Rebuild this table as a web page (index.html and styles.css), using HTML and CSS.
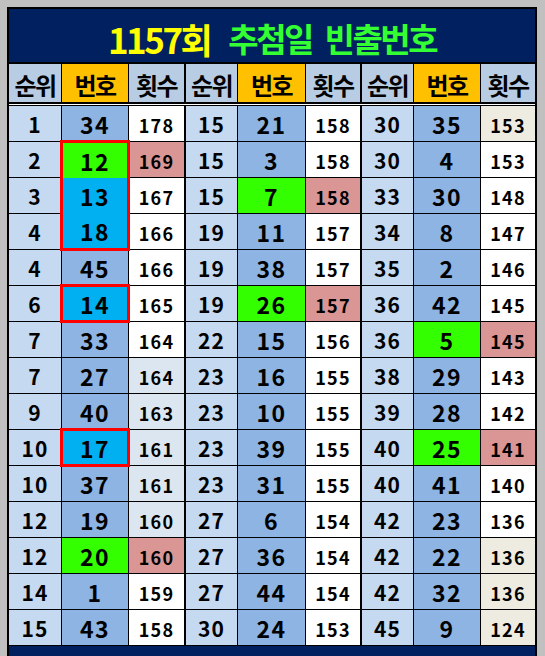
FILE: index.html
```html
<!DOCTYPE html>
<html lang="ko">
<head>
<meta charset="utf-8">
<link rel="stylesheet" href="styles.css">
</head>
<body>
<div class="sheet">
  <div class="title"><span class="t-yel">1157회</span><span class="t-grn">추첨일 빈출번호</span></div>
  <div class="head">
    <div class="h">순위</div><div class="h o">번호</div><div class="h sep">횟수</div>
    <div class="h">순위</div><div class="h o">번호</div><div class="h sep">횟수</div>
    <div class="h">순위</div><div class="h o">번호</div><div class="h">횟수</div>
  </div>
  <div class="dbl"></div>
  <div class="grid">
    <!-- row 1 -->
    <div class="c rk">1</div><div class="c nm">34</div><div class="c ct sep">178</div>
    <div class="c rk">15</div><div class="c nm">21</div><div class="c ct sep">158</div>
    <div class="c rk">30</div><div class="c nm">35</div><div class="c ct bg">153</div>
    <!-- row 2 -->
    <div class="c rk">2</div>
    <div class="hl3"><div class="c nm g">12</div><div class="c nm cy">13</div><div class="c nm cy">18</div></div>
    <div class="c ct sep pk">169</div>
    <div class="c rk">15</div><div class="c nm">3</div><div class="c ct sep">158</div>
    <div class="c rk">30</div><div class="c nm">4</div><div class="c ct">153</div>
    <!-- row 3 -->
    <div class="c rk">3</div><div class="c ct sep">167</div>
    <div class="c rk">15</div><div class="c nm g">7</div><div class="c ct sep pk">158</div>
    <div class="c rk">33</div><div class="c nm">30</div><div class="c ct">148</div>
    <!-- row 4 -->
    <div class="c rk">4</div><div class="c ct sep">166</div>
    <div class="c rk">19</div><div class="c nm">11</div><div class="c ct sep">157</div>
    <div class="c rk">34</div><div class="c nm">8</div><div class="c ct">147</div>
    <!-- row 5 -->
    <div class="c rk">4</div><div class="c nm">45</div><div class="c ct sep">166</div>
    <div class="c rk">19</div><div class="c nm">38</div><div class="c ct sep">157</div>
    <div class="c rk">35</div><div class="c nm">2</div><div class="c ct">146</div>
    <!-- row 6 -->
    <div class="c rk">6</div><div class="hl"><div class="c nm cy">14</div></div><div class="c ct sep">165</div>
    <div class="c rk">19</div><div class="c nm g">26</div><div class="c ct sep pk">157</div>
    <div class="c rk">36</div><div class="c nm">42</div><div class="c ct">145</div>
    <!-- row 7 -->
    <div class="c rk">7</div><div class="c nm">33</div><div class="c ct sep">164</div>
    <div class="c rk">22</div><div class="c nm">15</div><div class="c ct sep">156</div>
    <div class="c rk">36</div><div class="c nm g">5</div><div class="c ct pk">145</div>
    <!-- row 8 -->
    <div class="c rk">7</div><div class="c nm">27</div><div class="c ct sep lt">164</div>
    <div class="c rk">23</div><div class="c nm">16</div><div class="c ct sep">155</div>
    <div class="c rk">38</div><div class="c nm">29</div><div class="c ct">143</div>
    <!-- row 9 -->
    <div class="c rk">9</div><div class="c nm">40</div><div class="c ct sep lt">163</div>
    <div class="c rk">23</div><div class="c nm">10</div><div class="c ct sep">155</div>
    <div class="c rk">39</div><div class="c nm">28</div><div class="c ct">142</div>
    <!-- row 10 -->
    <div class="c rk">10</div><div class="hl"><div class="c nm cy">17</div></div><div class="c ct sep lt">161</div>
    <div class="c rk">23</div><div class="c nm">39</div><div class="c ct sep">155</div>
    <div class="c rk">40</div><div class="c nm g">25</div><div class="c ct pk">141</div>
    <!-- row 11 -->
    <div class="c rk">10</div><div class="c nm">37</div><div class="c ct sep lt">161</div>
    <div class="c rk">23</div><div class="c nm">31</div><div class="c ct sep">155</div>
    <div class="c rk">40</div><div class="c nm">41</div><div class="c ct">140</div>
    <!-- row 12 -->
    <div class="c rk">12</div><div class="c nm">19</div><div class="c ct sep lt">160</div>
    <div class="c rk">27</div><div class="c nm">6</div><div class="c ct sep">154</div>
    <div class="c rk">42</div><div class="c nm">23</div><div class="c ct">136</div>
    <!-- row 13 -->
    <div class="c rk">12</div><div class="c nm g">20</div><div class="c ct sep pk">160</div>
    <div class="c rk">27</div><div class="c nm">36</div><div class="c ct sep">154</div>
    <div class="c rk">42</div><div class="c nm">22</div><div class="c ct bg">136</div>
    <!-- row 14 -->
    <div class="c rk">14</div><div class="c nm">1</div><div class="c ct sep">159</div>
    <div class="c rk">27</div><div class="c nm">44</div><div class="c ct sep">154</div>
    <div class="c rk">42</div><div class="c nm">32</div><div class="c ct bg">136</div>
    <!-- row 15 -->
    <div class="c rk">15</div><div class="c nm">43</div><div class="c ct sep">158</div>
    <div class="c rk">30</div><div class="c nm">24</div><div class="c ct sep">153</div>
    <div class="c rk">45</div><div class="c nm">9</div><div class="c ct bg">124</div>
  </div>
  <div class="foot"></div>
</div>
</body>
</html>
```
FILE: styles.css
```css
html, body {
  margin: 0;
  padding: 0;
}
body {
  background: #c0c0c0;
  height: 656px;
  overflow: hidden;
  font-family: "Noto Sans CJK KR", "Noto Sans", sans-serif;
  color: #000;
}
.sheet {
  margin: 7px 0 0 7px;
  width: 530px;
  box-sizing: border-box;
  background: #000;
  padding: 2px 2px 0 2px;
}
.title {
  height: 53px;
  box-sizing: border-box;
  padding-top: 6px;
  background: #002060;
  margin-bottom: 2px;
  display: flex;
  justify-content: center;
  align-items: center;
  font-weight: 700;
  font-size: 35px;
  line-height: 1;
}
.t-yel {
  color: #ffff00;
  letter-spacing: -2.5px;
  margin-right: 18px;
}
.t-grn {
  color: #33ff33;
  font-size: 33px;
  letter-spacing: -2.5px;
  word-spacing: 6px;
}
.head, .grid {
  display: grid;
  grid-template-columns: 52px 66px 56px 51px 67px 55px 51px 66px 54px;
  column-gap: 1px;
}
.head {
  grid-template-rows: 38px;
}
.h {
  background: #b8cce4;
  display: flex;
  align-items: center;
  justify-content: center;
  padding-top: 4px;
  box-sizing: border-box;
  font-weight: 700;
  font-size: 24px;
  letter-spacing: -1.5px;
  line-height: 1;
}
.h.o {
  background: #ffc000;
}
.sep {
  border-right: 1px solid #000;
}
.dbl {
  height: 4px;
  box-sizing: border-box;
  border-top: 2px solid #000;
  border-bottom: 1px solid #000;
  background: #fff;
}
.grid {
  grid-auto-rows: 35px;
  row-gap: 1px;
}
.c {
  display: flex;
  align-items: center;
  justify-content: center;
  box-sizing: border-box;
  padding-top: 2px;
  font-weight: 700;
  line-height: 1;
}
.rk {
  background: #c5d9f1;
  font-size: 21px;
  letter-spacing: 1px;
}
.nm {
  background: #8db4e2;
  font-size: 23px;
  letter-spacing: 1.5px;
}
.ct {
  background: #ffffff;
  font-size: 18px;
  letter-spacing: 1.2px;
}
.g { background: #33ff00; }
.cy { background: #00b0f0; }
.pk { background: #da9694; }
.lt { background: #dce6f1; }
.bg { background: #eeece1; }
.hl3, .hl {
  position: relative;
  z-index: 1;
  margin: -2px;
  border: 3px solid #ff0000;
  box-sizing: border-box;
  display: flex;
  flex-direction: column;
}
.hl3 {
  grid-row: span 3;
}
.hl3 > .c, .hl > .c {
  flex: 1;
}
.foot {
  margin-top: 1px;
  height: 20px;
  background: #002060;
}
```
